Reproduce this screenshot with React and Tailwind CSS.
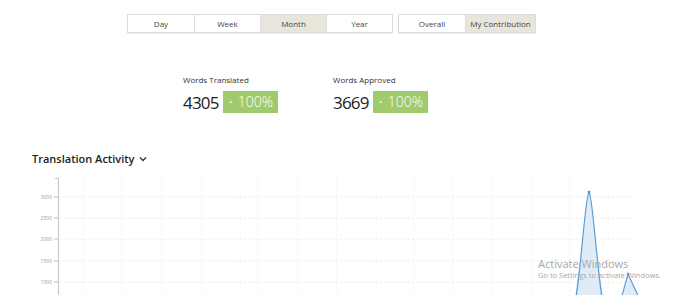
import React from "react";

const font = { fontFamily: '"Open Sans", "Liberation Sans", sans-serif' };

const vLines = [83, 122, 162, 202, 240, 258, 298, 337, 376, 414, 453, 492, 532, 570, 608];
const yTicks = [
  { label: "3000", y: 197 },
  { label: "2500", y: 218 },
  { label: "2000", y: 239 },
  { label: "1500", y: 261 },
  { label: "1000", y: 282 },
];

const Toggle = ({ items, active, widths }) => (
  <div className="flex border border-[#dcdcdc] shadow-[0_1px_1px_rgba(0,0,0,0.06)]">
    {items.map((item, i) => (
      <div
        key={item}
        className={`h-[17px] flex items-center justify-center text-[8px] text-[#444] ${
          i > 0 ? "border-l border-[#dcdcdc]" : ""
        } ${item === active ? "bg-[#e8e6dc]" : "bg-white"}`}
        style={{ width: widths[i] }}
      >
        {item}
      </div>
    ))}
  </div>
);

const Stat = ({ label, value }) => (
  <div className="flex flex-col w-[150px]">
    <span className="text-[8px] text-[#333] leading-none">{label}</span>
    <div className="flex items-center mt-[7px]">
      <span className="text-[17px] text-[#222] leading-none tracking-[-0.8px]">{value}</span>
      <span className="ml-[4px] h-[22px] w-[55px] pl-[6px] bg-[#9fcb6c] text-white text-[14px] font-light flex items-center leading-none">
        <span className="text-[4px] mr-[5px]">▲</span>100%
      </span>
    </div>
  </div>
);

const Chart = () => {
  const o = 170;
  return (
    <svg width="675" height="125" viewBox={`0 ${o} 675 125`} className="block">
      {vLines.map((x) => (
        <line key={x} x1={x} x2={x} y1={178} y2={295} stroke="#f2f2f2" strokeWidth="1" strokeDasharray="2 2" />
      ))}
      {yTicks.map((t) => (
        <g key={t.label}>
          <line x1={60} x2={632} y1={t.y} y2={t.y} stroke="#ececec" strokeWidth="1" strokeDasharray="2 2" />
          <line x1={54} x2={58} y1={t.y} y2={t.y} stroke="#bbb" strokeWidth="1" />
          <text x={52} y={t.y + 1.8} fontSize="5" fill="#999" textAnchor="end" style={font}>
            {t.label}
          </text>
        </g>
      ))}
      <line x1={58.5} x2={58.5} y1={178} y2={295} stroke="#c8c8c8" strokeWidth="1.2" />
      <line x1={55} x2={58} y1={178.5} y2={178.5} stroke="#c8c8c8" strokeWidth="1" />
      <path
        d="M570 325 C580 300 584 200 589 192 C594 200 598 300 608 325 L618 310 L628 274 L640 300 L640 325 Z"
        fill="#d9e9f7"
        fillOpacity="0.85"
      />
      <path
        d="M570 325 C580 300 584 200 589 192 C594 200 598 300 608 325 L618 310 L628 274 L640 300"
        fill="none"
        stroke="#5b9fd8"
        strokeWidth="1.2"
      />
      <circle cx={589} cy={192} r={1.3} fill="#4a8fcc" />
      <circle cx={628} cy={274} r={1.3} fill="#4a8fcc" />
    </svg>
  );
};

export default function App() {
  return (
    <div className="relative w-[675px] h-[295px] overflow-hidden bg-white" style={font}>
      <div className="flex pt-[14px] pl-[127px]">
        <Toggle items={["Day", "Week", "Month", "Year"]} active="Month" widths={[66, 66, 66, 66]} />
        <div className="ml-[5px]">
          <Toggle items={["Overall", "My Contribution"]} active="My Contribution" widths={[66, 70]} />
        </div>
      </div>

      <div className="flex pl-[183px] mt-[43px]">
        <Stat label="Words Translated" value="4305" />
        <Stat label="Words Approved" value="3669" />
      </div>

      <div className="flex items-center pl-[32px] mt-[38px]">
        <span className="text-[11px] font-semibold text-[#222]">Translation Activity</span>
        <svg width="8" height="6" viewBox="0 0 8 6" className="ml-[5px]">
          <path d="M1 1.5 L4 4.5 L7 1.5" fill="none" stroke="#333" strokeWidth="1.4" />
        </svg>
      </div>

      <div className="mt-[2px]">
        <Chart />
      </div>

      <div className="absolute left-[538px] top-[257px] text-[#a8a8a8] leading-tight pointer-events-none">
        <div className="text-[11px]">Activate Windows</div>
        <div className="text-[7.5px]">Go to Settings to activate Windows.</div>
      </div>
    </div>
  );
}
